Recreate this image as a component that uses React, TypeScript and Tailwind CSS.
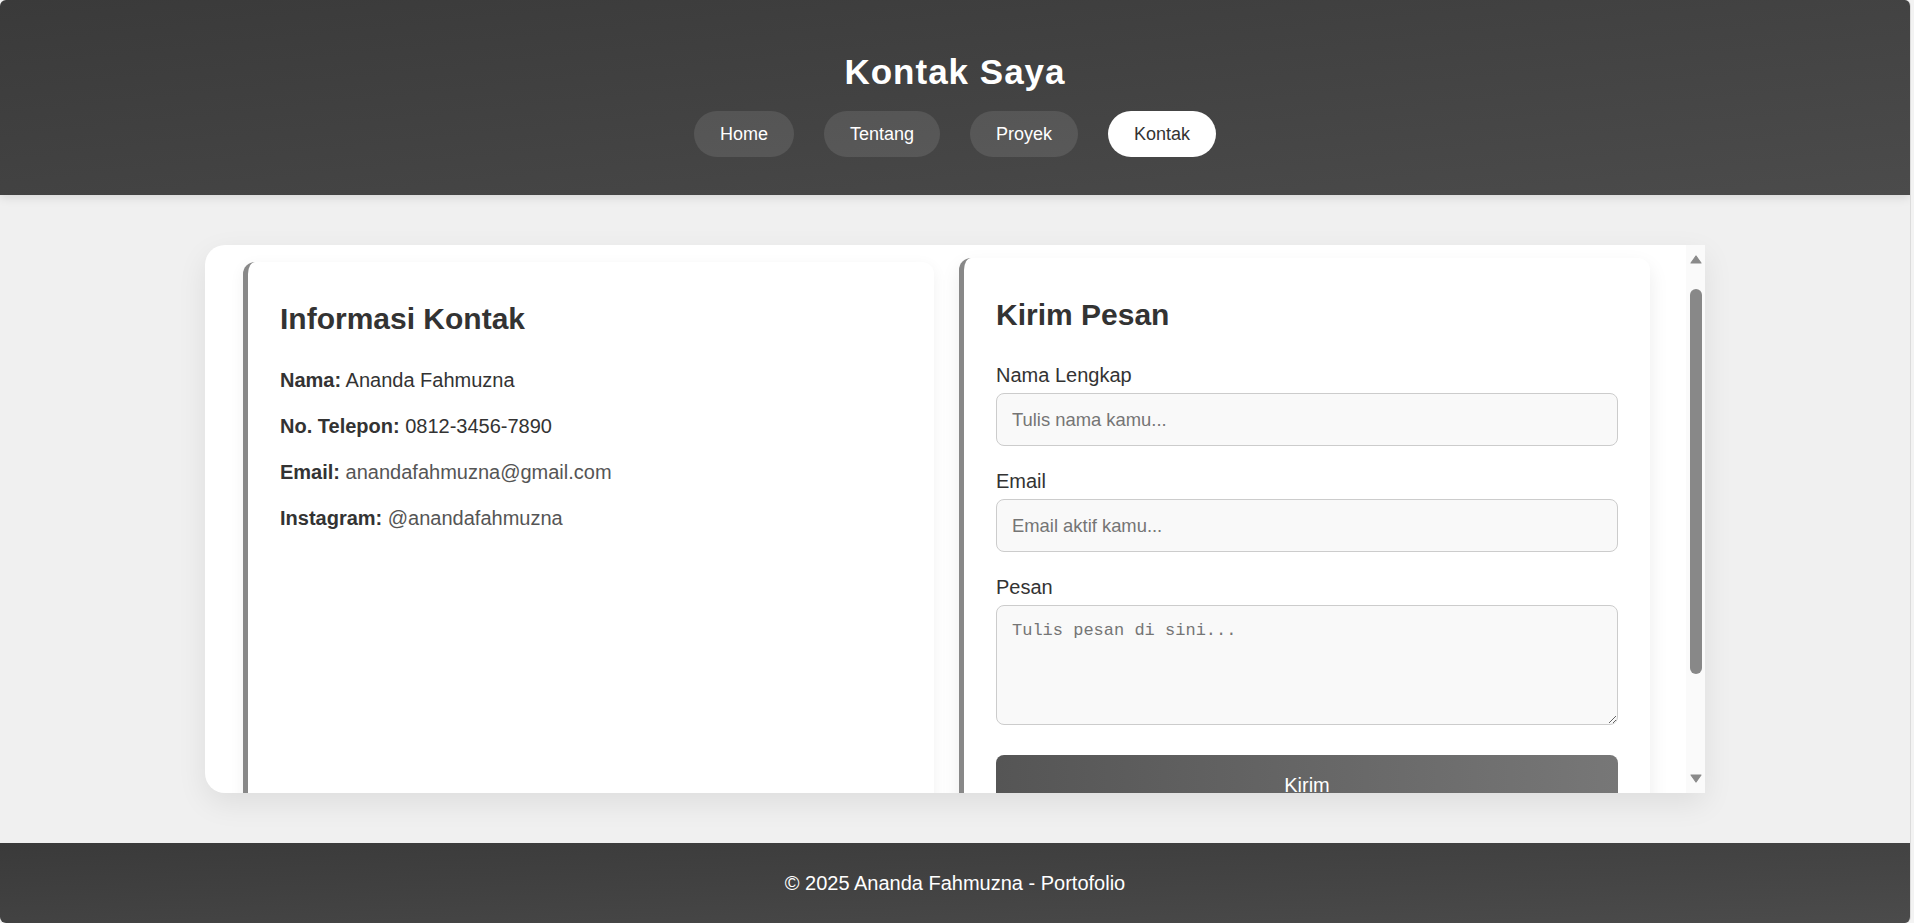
const navItems = [
  { label: "Home", active: false },
  { label: "Tentang", active: false },
  { label: "Proyek", active: false },
  { label: "Kontak", active: true },
];

function Arrow({ down }: { down?: boolean }) {
  return (
    <svg width="12" height="9" viewBox="0 0 12 9" className={down ? "rotate-180" : ""}>
      <path d="M6 1 L11 8 L1 8 Z" fill="#8a8a8a" stroke="#8a8a8a" strokeWidth="1.2" strokeLinejoin="round" />
    </svg>
  );
}

function InfoRow({ label, value, link }: { label: string; value: string; link?: boolean }) {
  return (
    <p className="text-[20px] leading-[30px] mb-[16px] text-[#333]">
      <strong className="font-bold">{label}</strong>{" "}
      <span className={link ? "text-[#555]" : ""}>{value}</span>
    </p>
  );
}

export default function App() {
  return (
    <div className="min-h-screen bg-[#f3f3f3] font-['Liberation_Sans',Arial,sans-serif]">
      <div className="w-[1911px] border-r border-[#dcdcdc] rounded-[6px] overflow-hidden">
        <header className="bg-linear-to-br from-[#3a3a3a] to-[#4b4b4b] pt-[52px] pb-[38px] text-center shadow-[0_2px_10px_rgba(0,0,0,0.12)] relative">
          <h1 className="text-[35px] leading-[40px] font-bold tracking-[1px] text-white mb-[19px]">
            Kontak Saya
          </h1>
          <nav className="flex justify-center gap-[30px]">
            {navItems.map((item) => (
              <a
                key={item.label}
                className={
                  item.active
                    ? "h-[46px] px-[26px] flex items-center rounded-full bg-white text-[#333] text-[18px]"
                    : "h-[46px] px-[26px] flex items-center rounded-full bg-white/10 text-white text-[18px]"
                }
              >
                {item.label}
              </a>
            ))}
          </nav>
        </header>

        <main className="bg-[#f0f0f0] py-[50px]">
          <div className="w-[1500px] h-[548px] mx-auto flex bg-white rounded-l-[20px] shadow-[0_10px_30px_rgba(0,0,0,0.08)] overflow-hidden">
            <div className="flex-1 overflow-hidden pt-[17px] pl-[38px] pr-[36px]">
              <div className="grid grid-cols-2 gap-[25px] items-stretch pb-[40px]">
                <section className="bg-white border-l-[5px] border-[#888] rounded-[12px] pt-[39px] px-[32px] pb-[32px] shadow-[0_4px_15px_rgba(0,0,0,0.06)]">
                  <h2 className="text-[30px] leading-[36px] font-bold text-[#333] mb-[28px]">
                    Informasi Kontak
                  </h2>
                  <InfoRow label="Nama:" value="Ananda Fahmuzna" />
                  <InfoRow label="No. Telepon:" value="0812-3456-7890" />
                  <InfoRow label="Email:" value="anandafahmuzna@gmail.com" link />
                  <InfoRow label="Instagram:" value="@anandafahmuzna" link />
                </section>

                <section className="bg-white border-l-[5px] border-[#888] rounded-[12px] pt-[39px] px-[32px] pb-[32px] -translate-y-1 shadow-[0_8px_20px_rgba(0,0,0,0.08)]">
                  <h2 className="text-[30px] leading-[36px] font-bold text-[#333] mb-[31px]">
                    Kirim Pesan
                  </h2>
                  <div className="mb-[24px]">
                    <label className="block text-[20px] leading-[23px] text-[#333] mb-[6px]">Nama Lengkap</label>
                    <input
                      type="text"
                      placeholder="Tulis nama kamu..."
                      className="block w-full h-[53px] px-[15px] rounded-[8px] border border-[#ccc] bg-[#f9f9f9] text-[18.4px] font-['Liberation_Sans',Arial,sans-serif] placeholder:text-[#757575] outline-none"
                    />
                  </div>
                  <div className="mb-[24px]">
                    <label className="block text-[20px] leading-[23px] text-[#333] mb-[6px]">Email</label>
                    <input
                      type="email"
                      placeholder="Email aktif kamu..."
                      className="block w-full h-[53px] px-[15px] rounded-[8px] border border-[#ccc] bg-[#f9f9f9] text-[18.4px] font-['Liberation_Sans',Arial,sans-serif] placeholder:text-[#757575] outline-none"
                    />
                  </div>
                  <div className="mb-[30px]">
                    <label className="block text-[20px] leading-[23px] text-[#333] mb-[6px]">Pesan</label>
                    <textarea
                      placeholder="Tulis pesan di sini..."
                      className="block w-full h-[120px] p-[15px] rounded-[8px] border border-[#ccc] bg-[#f9f9f9] text-[17px] leading-[20px] font-['Liberation_Mono',monospace] placeholder:text-[#757575] outline-none"
                    />
                  </div>
                  <button className="w-full h-[60px] rounded-[8px] bg-linear-to-r from-[#555] to-[#777] text-white text-[20px]">
                    Kirim
                  </button>
                </section>
              </div>
            </div>

            <div className="w-[19px] bg-[#fafafa] flex flex-col items-center pt-[10px] pb-[10px]">
              <Arrow />
              <div className="w-[12px] h-[385px] mt-[25px] rounded-full bg-[#888]" />
              <div className="flex-1" />
              <Arrow down />
            </div>
          </div>
        </main>

        <footer className="bg-linear-to-br from-[#3a3a3a] to-[#4b4b4b] h-[80px] flex items-center justify-center text-white text-[20px]">
          © 2025 Ananda Fahmuzna - Portofolio
        </footer>
      </div>
    </div>
  );
}
